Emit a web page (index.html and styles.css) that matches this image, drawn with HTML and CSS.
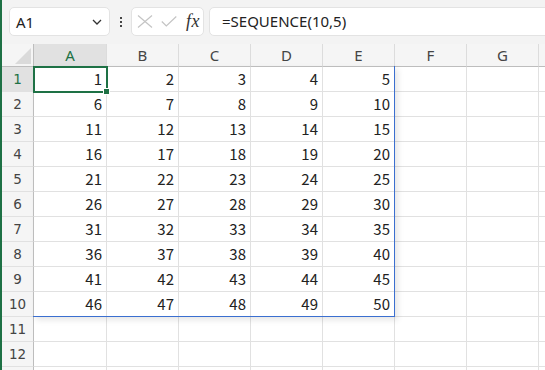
FILE: index.html
```html
<!DOCTYPE html>
<html lang="ja">
<head>
  <meta charset="UTF-8" />
  <title>Book1 - Excel</title>
  <link rel="stylesheet" href="styles.css">
</head>
<body>
  <div class="window">
    <!-- formula bar -->
    <div class="topbar">
      <div class="namebox">
        <span>A1</span>
        <svg width="10" height="6" viewBox="0 0 10 6"><path d="M1 1l4 4 4-4" fill="none" stroke="#333" stroke-width="1.3"/></svg>
      </div>
      <div class="dots"><i></i><i></i><i></i></div>
      <div class="fxbox">
        <svg width="16" height="13" viewBox="0 0 16 13"><path d="M1 0.5l14 12M15 0.5l-14 12" fill="none" stroke="#c4c4c4" stroke-width="1.2"/></svg>
        <svg width="16" height="11" viewBox="0 0 16 11"><path d="M0.8 5.5l4.5 4.5 10-9.5" fill="none" stroke="#c4c4c4" stroke-width="1.2"/></svg>
        <span class="fx">fx</span>
      </div>
      <div class="formula">=SEQUENCE(10,5)</div>
    </div>

    <!-- grid -->
    <div class="sheet">
      <div class="row head">
        <div class="corner"><b></b></div>
        <div class="ch active">A</div><div class="ch">B</div><div class="ch">C</div><div class="ch">D</div>
        <div class="ch">E</div><div class="ch">F</div><div class="ch">G</div><div class="ch"></div>
      </div>
      <div class="row"><div class="rh active">1</div><div class="c">1</div><div class="c">2</div><div class="c">3</div><div class="c">4</div><div class="c">5</div><div class="c"></div><div class="c"></div><div class="c"></div></div>
      <div class="row"><div class="rh">2</div><div class="c">6</div><div class="c">7</div><div class="c">8</div><div class="c">9</div><div class="c">10</div><div class="c"></div><div class="c"></div><div class="c"></div></div>
      <div class="row"><div class="rh">3</div><div class="c">11</div><div class="c">12</div><div class="c">13</div><div class="c">14</div><div class="c">15</div><div class="c"></div><div class="c"></div><div class="c"></div></div>
      <div class="row"><div class="rh">4</div><div class="c">16</div><div class="c">17</div><div class="c">18</div><div class="c">19</div><div class="c">20</div><div class="c"></div><div class="c"></div><div class="c"></div></div>
      <div class="row"><div class="rh">5</div><div class="c">21</div><div class="c">22</div><div class="c">23</div><div class="c">24</div><div class="c">25</div><div class="c"></div><div class="c"></div><div class="c"></div></div>
      <div class="row"><div class="rh">6</div><div class="c">26</div><div class="c">27</div><div class="c">28</div><div class="c">29</div><div class="c">30</div><div class="c"></div><div class="c"></div><div class="c"></div></div>
      <div class="row"><div class="rh">7</div><div class="c">31</div><div class="c">32</div><div class="c">33</div><div class="c">34</div><div class="c">35</div><div class="c"></div><div class="c"></div><div class="c"></div></div>
      <div class="row"><div class="rh">8</div><div class="c">36</div><div class="c">37</div><div class="c">38</div><div class="c">39</div><div class="c">40</div><div class="c"></div><div class="c"></div><div class="c"></div></div>
      <div class="row"><div class="rh">9</div><div class="c">41</div><div class="c">42</div><div class="c">43</div><div class="c">44</div><div class="c">45</div><div class="c"></div><div class="c"></div><div class="c"></div></div>
      <div class="row"><div class="rh">10</div><div class="c">46</div><div class="c">47</div><div class="c">48</div><div class="c">49</div><div class="c">50</div><div class="c"></div><div class="c"></div><div class="c"></div></div>
      <div class="row"><div class="rh">11</div><div class="c"></div><div class="c"></div><div class="c"></div><div class="c"></div><div class="c"></div><div class="c"></div><div class="c"></div><div class="c"></div></div>
      <div class="row"><div class="rh">12</div><div class="c"></div><div class="c"></div><div class="c"></div><div class="c"></div><div class="c"></div><div class="c"></div><div class="c"></div><div class="c"></div></div>
      <div class="row"><div class="rh"></div><div class="c"></div><div class="c"></div><div class="c"></div><div class="c"></div><div class="c"></div><div class="c"></div><div class="c"></div><div class="c"></div></div>

      <!-- spill range + active cell overlays -->
      <div class="spill"></div>
      <div class="selection"></div>
      <div class="handle"></div>
    </div>
  </div>
</body>
</html>
```

FILE: styles.css
```css
* {
  box-sizing: border-box;
}

body {
  margin: 0;
  background: #fff;
  font-family: "Noto Sans", sans-serif;
  overflow: hidden;
}

.window {
  height: 370px;
  border-left: 2px solid #1e7145;
  overflow: hidden;
}

/* formula bar */
.topbar {
  display: flex;
  align-items: flex-start;
  height: 44px;
  padding: 7px 0 0 7px;
  background: #f3f3f3;
}

.namebox {
  display: flex;
  align-items: center;
  justify-content: space-between;
  width: 101px;
  height: 29px;
  padding: 0 7px 0 6px;
  background: #fff;
  border: 1px solid #e3e3e3;
  border-radius: 5px;
  font-size: 15px;
  color: #222;
}

.dots {
  display: flex;
  flex-direction: column;
  align-items: center;
  gap: 2px;
  width: 21px;
  padding-top: 10px;
}

.dots i {
  width: 2px;
  height: 2px;
  background: #444;
}

.fxbox {
  display: flex;
  align-items: center;
  width: 73px;
  height: 29px;
  padding-left: 5px;
  background: #fff;
  border: 1px solid #e3e3e3;
  border-radius: 5px;
}

.fxbox svg:nth-child(2) {
  margin-left: 8px;
}

.fx {
  margin-left: 9px;
  font-family: "Liberation Serif", serif;
  font-style: italic;
  font-size: 18px;
  color: #333;
  letter-spacing: 0.5px;
}

.formula {
  flex: 1;
  height: 29px;
  margin-left: 5px;
  margin-right: -8px;
  padding-left: 12px;
  line-height: 27px;
  background: #fff;
  border: 1px solid #e3e3e3;
  border-radius: 5px;
  font-size: 15px;
  color: #222;
}

/* sheet grid */
.sheet {
  position: relative;
}

.row {
  display: grid;
  grid-template-columns: 32px 73px repeat(6, 72px) 72px;
  height: 25px;
}

.row > div {
  border-right: 1px solid #e1e1e1;
  border-bottom: 1px solid #e1e1e1;
}

.row.head {
  height: 23px;
  background: #f5f5f5;
}

.row.head > div {
  border-bottom-color: #bdbdbd;
  border-right-color: #dcdcdc;
}

.corner {
  position: relative;
  border-right-color: #bdbdbd !important;
}

.corner b {
  position: absolute;
  right: 2px;
  bottom: 2px;
  width: 0;
  height: 0;
  border-left: 16px solid transparent;
  border-bottom: 16px solid #dadada;
}

.ch {
  text-align: center;
  font-size: 15px;
  line-height: 22px;
  color: #444;
}

.ch.active {
  background: #e1e1e1;
  color: #1e7145;
}

.rh {
  background: #f5f5f5;
  border-right-color: #bdbdbd !important;
  text-align: center;
  font-family: "DejaVu Sans", sans-serif;
  font-size: 13.5px;
  line-height: 24px;
  color: #444;
}

.rh.active {
  background: #e1e1e1;
  color: #1e7145;
}

.c {
  padding-right: 4px;
  text-align: right;
  font-family: "Noto Sans CJK JP", sans-serif;
  font-size: 15px;
  line-height: 24px;
  color: #222;
}

.spill {
  position: absolute;
  left: 31px;
  top: 22px;
  width: 362px;
  height: 251px;
  border-right: 1px solid #3b6fd0;
  border-bottom: 1px solid #3b6fd0;
  box-shadow: 3px 3px 6px rgba(0, 0, 0, 0.1);
  pointer-events: none;
}

.selection {
  position: absolute;
  left: 31px;
  top: 22px;
  width: 75px;
  height: 27px;
  border: 2px solid #1e7145;
}

.handle {
  position: absolute;
  left: 101px;
  top: 44px;
  width: 7px;
  height: 7px;
  background: #1e7145;
  border: 1px solid #fff;
}
```
